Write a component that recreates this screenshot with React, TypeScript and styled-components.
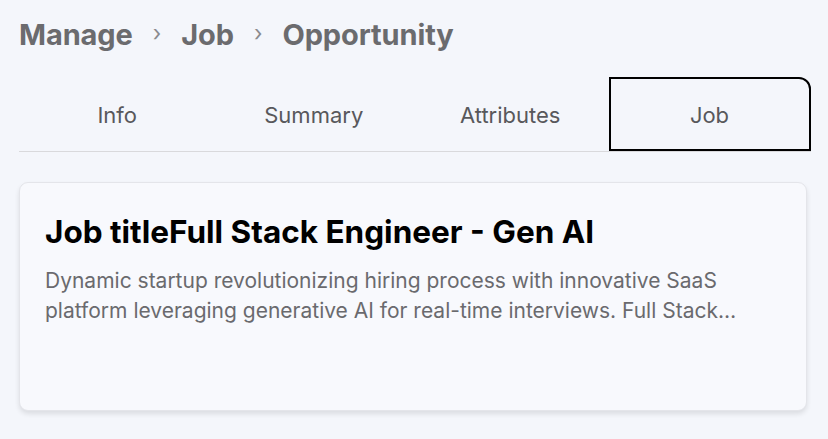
import React from "react";
import styled, { createGlobalStyle } from "styled-components";

const Global = createGlobalStyle`
  html, body { margin: 0; padding: 0; background: #f4f6fb; }
  body { font-family: Inter, "Noto Sans", sans-serif; -webkit-font-smoothing: antialiased; }
`;

const Page = styled.div`
  width: 828px;
  height: 439px;
  box-sizing: border-box;
  padding: 14px 18px 0 19px;
  display: flex;
  flex-direction: column;
`;

const Breadcrumb = styled.nav`
  display: flex;
  align-items: center;
  gap: 20px;
  height: 40px;
`;

const Crumb = styled.span`
  font-size: 29px;
  font-weight: 700;
  color: #6b6b6e;
  letter-spacing: -0.1px;
`;

const Sep = styled.span`
  font-size: 22px;
  color: #8a8a8e;
  font-weight: 400;
  margin-top: -2px;
`;

const Tabs = styled.div`
  margin-top: 23px;
  display: grid;
  grid-template-columns: repeat(3, 196.5px) 202px;
  width: 791.5px;
  border-bottom: 1px solid #d9d9dc;
`;

const Tab = styled.div<{ $active?: boolean }>`
  height: 74px;
  display: flex;
  align-items: center;
  justify-content: center;
  padding-top: 1px;
  font-size: 22px;
  color: #58585c;
  box-sizing: border-box;
  margin-bottom: ${(p) => (p.$active ? "-2px" : "0")};
  border: ${(p) => (p.$active ? "2px solid #000" : "2px solid transparent")};
  border-top-right-radius: ${(p) => (p.$active ? "12px" : "0")};
`;

const Card = styled.section`
  margin-top: 30px;
  width: 788px;
  height: 229px;
  box-sizing: border-box;
  background: #f8f9fd;
  border: 1px solid #e4e5ea;
  border-radius: 9px;
  box-shadow: 0 3px 5px rgba(0, 0, 0, 0.1);
  padding: 29px 26px 0 25px;
`;

const Title = styled.h2`
  margin: 0;
  font-size: 31.5px;
  font-weight: 700;
  color: #000;
  line-height: 40px;
  letter-spacing: 0;
`;

const Desc = styled.p`
  margin: 14px 0 0;
  font-size: 21px;
  line-height: 30px;
  color: #6a6a6e;
  display: -webkit-box;
  -webkit-line-clamp: 2;
  -webkit-box-orient: vertical;
  overflow: hidden;
`;

const tabs = ["Info", "Summary", "Attributes", "Job"];

export default function App() {
  return (
    <>
      <Global />
      <Page>
        <Breadcrumb>
          <Crumb>Manage</Crumb>
          <Sep>›</Sep>
          <Crumb>Job</Crumb>
          <Sep>›</Sep>
          <Crumb>Opportunity</Crumb>
        </Breadcrumb>
        <Tabs>
          {tabs.map((t) => (
            <Tab key={t} $active={t === "Job"}>
              {t}
            </Tab>
          ))}
        </Tabs>
        <Card>
          <Title>Job titleFull Stack Engineer - Gen AI</Title>
          <Desc>
            Dynamic startup revolutionizing hiring process with innovative SaaS platform leveraging
            generative AI for real-time interviews. Full Stack Engineer role focused on building
            scalable systems and delightful product experiences.
          </Desc>
        </Card>
      </Page>
    </>
  );
}
